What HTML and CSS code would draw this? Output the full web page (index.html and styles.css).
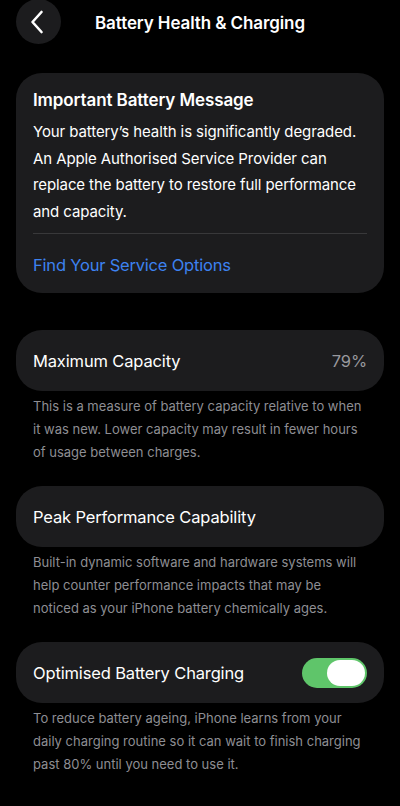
FILE: index.html
```html
<!DOCTYPE html>
<html lang="en">
<head>
    <meta charset="UTF-8"/>
    <meta name="viewport" content="width=device-width, initial-scale=1"/>
    <title>Battery Health &amp; Charging</title>
    <link rel="stylesheet" href="styles.css">
</head>
<body>

<header class="topbar">
    <button class="back-btn" aria-label="Back">
        <svg width="14" height="24" viewBox="0 0 14 24" fill="none">
            <path d="M11.5 2 L2.5 12 L11.5 22" stroke="#fff" stroke-width="2.6" stroke-linecap="round" stroke-linejoin="round"/>
        </svg>
    </button>
    <h1 class="titulo">Battery Health &amp; Charging</h1>
    <span></span>
</header>

<main class="contenido">

    <section class="card card-mensaje">
        <h2>Important Battery Message</h2>
        <p>Your battery’s health is significantly degraded. An Apple Authorised Service Provider can replace the battery to restore full performance and capacity.</p>
        <div class="separador"></div>
        <a href="#" class="enlace">Find Your Service Options</a>
    </section>

    <section class="grupo">
        <div class="card fila">
            <span>Maximum Capacity</span>
            <span class="valor">79%</span>
        </div>
        <p class="nota">This is a measure of battery capacity relative to when it was new. Lower capacity may result in fewer hours of usage between charges.</p>
    </section>

    <section class="grupo">
        <div class="card fila">
            <span>Peak Performance Capability</span>
        </div>
        <p class="nota">Built-in dynamic software and hardware systems will help counter performance impacts that may be noticed as your iPhone battery chemically ages.</p>
    </section>

    <section class="grupo">
        <div class="card fila">
            <span>Optimised Battery Charging</span>
            <span class="toggle on"><span class="knob"></span></span>
        </div>
        <p class="nota">To reduce battery ageing, iPhone learns from your daily charging routine so it can wait to finish charging past 80% until you need to use it.</p>
    </section>

</main>

</body>
</html>
```

FILE: styles.css
```css
/* RESET BASICO */
* {
    margin: 0;
    padding: 0;
    box-sizing: border-box;
}

body {
    font-family: Inter, "Noto Sans", sans-serif;
    background: #000;
    color: #fff;
    min-height: 100vh;
    overflow: hidden;
}

.topbar {
    display: grid;
    grid-template-columns: 45px 1fr 45px;
    align-items: center;
    padding: 0 16px;
    margin-top: -1px;
    height: 45px;
}

.back-btn {
    width: 45px;
    height: 45px;
    border-radius: 50%;
    border: none;
    background: #1c1c1e;
    display: flex;
    align-items: center;
    justify-content: center;
    padding-right: 3px;
    cursor: pointer;
}

.titulo {
    text-align: center;
    font-size: 17px;
    font-weight: 600;
    letter-spacing: -0.1px;
    padding-top: 3px;
}

.contenido {
    padding: 29px 16px 0;
    display: flex;
    flex-direction: column;
}

.card {
    background: #1c1c1e;
    border-radius: 26px;
}

.card-mensaje {
    padding: 16px 17px 17px;
}

.card-mensaje h2 {
    font-size: 17px;
    font-weight: 600;
    line-height: 22px;
    letter-spacing: -0.1px;
}

.card-mensaje p {
    font-size: 15px;
    line-height: 26.5px;
    margin-top: 8px;
    letter-spacing: -0.1px;
}

.separador {
    height: 1px;
    background: #38383a;
    margin: 8px 0 20px;
}

.enlace {
    display: block;
    color: #3d82f0;
    font-size: 16.5px;
    line-height: 22px;
    letter-spacing: -0.2px;
    text-decoration: none;
}

.grupo {
    margin-top: 37px;
}

.grupo + .grupo {
    margin-top: 22px;
}

.fila {
    height: 61px;
    padding: 0 17px;
    display: flex;
    align-items: center;
    justify-content: space-between;
    font-size: 16.5px;
    letter-spacing: -0.15px;
}

.valor {
    color: #98989d;
}

.nota {
    margin-top: 4px;
    padding: 0 17px;
    color: #8e8e93;
    font-size: 13px;
    line-height: 23px;
}

/* Interruptor */
.toggle {
    width: 65px;
    height: 30px;
    border-radius: 15px;
    background: #3a3a3c;
    display: flex;
    align-items: center;
    padding: 2px;
}

.toggle.on {
    background: #5fc56a;
    justify-content: flex-end;
}

.knob {
    width: 38px;
    height: 26px;
    border-radius: 13px;
    background: #fff;
}
```
